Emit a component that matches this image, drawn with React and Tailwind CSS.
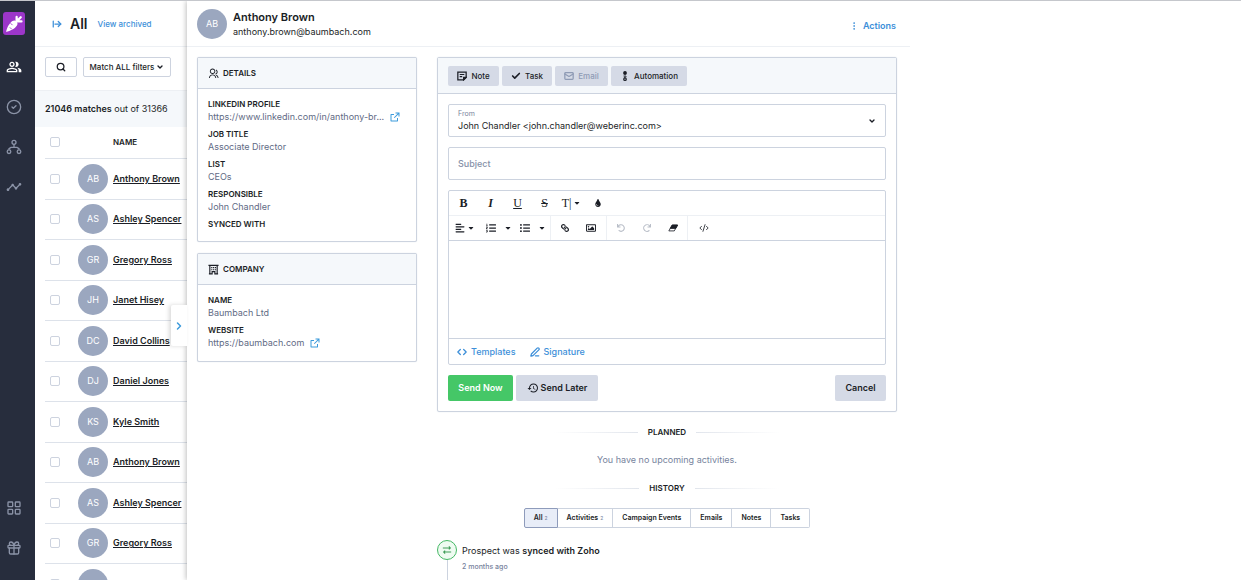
import {
  ArrowRightFromLine,
  Check,
  ChevronDown,
  ChevronRight,
  CircleCheck,
  Code,
  CodeXml,
  EllipsisVertical,
  Gift,
  LayoutGrid,
  Mail,
  PenLine,
  Search,
} from 'lucide-react'
import {
  FaAlignLeft,
  FaCaretDown,
  FaLink,
  FaListOl,
  FaListUl,
  FaRedo,
  FaRegImage,
  FaTint,
  FaUndo,
} from 'react-icons/fa'
import { MdHistory, MdOutlinePeopleAlt, MdTimeline } from 'react-icons/md'
import { RiExternalLinkLine, RiGroupLine } from 'react-icons/ri'

const prospects = [
  'Anthony Brown',
  'Ashley Spencer',
  'Gregory Ross',
  'Janet Hisey',
  'David Collins',
  'Daniel Jones',
  'Kyle Smith',
  'Anthony Brown',
  'Ashley Spencer',
  'Gregory Ross',
  'Janet Hisey',
]

const details = [
  { label: 'LINKEDIN PROFILE', value: 'https://www.linkedin.com/in/anthony-br...', link: true },
  { label: 'JOB TITLE', value: 'Associate Director' },
  { label: 'LIST', value: 'CEOs' },
  { label: 'RESPONSIBLE', value: 'John Chandler' },
  { label: 'SYNCED WITH' },
]

const company = [
  { label: 'NAME', value: 'Baumbach Ltd' },
  { label: 'WEBSITE', value: 'https://baumbach.com', link: true },
]

const historyTabs = [
  { name: 'All', count: 2 },
  { name: 'Activities', count: 2 },
  { name: 'Campaign Events' },
  { name: 'Emails' },
  { name: 'Notes' },
  { name: 'Tasks' },
]

const initials = (name) => name.split(' ').map((part) => part[0]).join('')

function CarrotLogo({ className }) {
  return (
    <svg viewBox="0 0 24 24" className={className}>
      <path
        d="M1.500 22.500C2.500 17 6 10.500 10 8c2-1.300 4.300-.8 5.500.6 1.300 1.400 1.600 3.500.4 5.400C13.500 18 7 21.500 1.500 22.500z"
        fill="currentColor"
      />
      <path d="M15.500 8.500L15.500 2.500M15.500 8.500L21 3M15.500 8.500L22 8.500" stroke="currentColor" strokeWidth="3" strokeLinecap="round" />
      <path d="M7.500 11l2.500 2.500M9 19l-2.500-2.500" stroke="#9c36c9" strokeWidth="1.2" />
    </svg>
  )
}

function NetworkIcon({ className }) {
  return (
    <svg viewBox="0 0 24 24" fill="none" stroke="currentColor" strokeWidth="2" className={className}>
      <circle cx="12" cy="5" r="3" />
      <circle cx="4.5" cy="19" r="2.7" />
      <circle cx="19.5" cy="19" r="2.7" />
      <path d="M12 8v4.5M4.5 16v-1.5l3-2h9l3 2V16" />
    </svg>
  )
}

function BuildingIcon({ className }) {
  return (
    <svg viewBox="0 0 24 24" fill="none" stroke="currentColor" strokeWidth="2.5" className={className}>
      <path d="M1 3h22M4 3v18M20 3v18M2 21.500h7v-5h6v5h7" />
      <path d="M7 8h2.500M11 8h2.500M15 8h2.500M7 12.500h2.500M11 12.500h2.500M15 12.500h2.500" />
    </svg>
  )
}

function NoteIcon({ className }) {
  return (
    <svg viewBox="0 0 24 24" fill="none" stroke="currentColor" strokeWidth="3" className={className}>
      <path d="M2 2.500h20v13l-6 6H2z" />
      <path d="M6.500 8.500h11M6.500 13.500h6" strokeWidth="2.5" />
      <path d="M16 21v-6h6z" fill="currentColor" />
    </svg>
  )
}

function AutomationIcon({ className }) {
  return (
    <svg viewBox="0 0 24 24" fill="none" stroke="currentColor" strokeWidth="3" className={className}>
      <circle cx="12" cy="4.5" r="3" fill="currentColor" />
      <circle cx="12" cy="19.5" r="3" />
      <path d="M12 7v9M8.500 12l3.500 3.500 3.500-3.500" strokeWidth="2" />
    </svg>
  )
}

function EraserIcon({ className }) {
  return (
    <svg viewBox="0 0 24 24" fill="none" stroke="currentColor" strokeWidth="2" className={className}>
      <path d="M10 5h13l-8 14H2z" />
      <path d="M10 5h13l-4.500 8h-13z" fill="currentColor" />
    </svg>
  )
}

function SyncIcon({ className }) {
  return (
    <svg viewBox="0 0 24 24" fill="none" stroke="currentColor" strokeWidth="2.5" className={className}>
      <path d="M2 7h18M16.500 3.500L20 7l-3.500 3.500" />
      <path d="M22 17H4M7.500 13.500L4 17l3.500 3.500" />
    </svg>
  )
}

function Avatar({ name }) {
  return (
    <div className="flex h-[30px] w-[30px] shrink-0 items-center justify-center rounded-full bg-[#9ba7bf] text-[9px] text-white">
      {initials(name)}
    </div>
  )
}

function Sidebar() {
  return (
    <nav className="flex w-[35px] shrink-0 flex-col items-center bg-[#272d3d] pt-[11px] pr-[7px] pb-6 text-[#8b93a7]">
      <a href="#" aria-label="Home" className="flex h-[23px] w-[22px] shrink-0 items-center justify-center rounded-[3px] bg-[#9c36c9] text-white">
        <CarrotLogo className="h-[18px] w-[18px]" />
      </a>
      <a href="#" aria-label="Prospects" className="mt-6 text-white"><MdOutlinePeopleAlt className="h-4 w-4" /></a>
      <a href="#" aria-label="Tasks" className="mt-6"><CircleCheck className="h-4 w-4" /></a>
      <a href="#" aria-label="Automations" className="mt-6"><NetworkIcon className="h-4 w-4" /></a>
      <a href="#" aria-label="Reports" className="mt-6"><MdTimeline className="h-4 w-4" /></a>
      <a href="#" aria-label="Apps" className="mt-auto"><LayoutGrid className="h-4 w-4" /></a>
      <a href="#" aria-label="Rewards" className="mt-6"><Gift className="h-4 w-4" /></a>
    </nav>
  )
}

function Checkbox({ label }) {
  return (
    <input
      type="checkbox"
      aria-label={label}
      className="block h-[10px] w-[10px] appearance-none rounded-[2px] border border-[#cdd3df] bg-white"
    />
  )
}

function ProspectList() {
  return (
    <section className="flex w-[152px] shrink-0 flex-col">
      <header className="flex h-[46px] shrink-0 items-center border-b border-[#edf0f4] pl-[17px]">
        <ArrowRightFromLine className="h-[10px] w-[10px] text-[#3d8fd9]" strokeWidth={3} />
        <h1 className="ml-2 text-[14px] font-semibold">All</h1>
        <a href="#" className="ml-[10px] text-[8px] font-medium text-[#3d8fd9]">View archived</a>
      </header>
      <div className="flex h-[44px] shrink-0 items-center gap-[6px] border-b border-[#edf0f4] pb-[3px] pl-[10px]">
        <button aria-label="Search" className="flex h-5 w-8 items-center justify-center rounded-[2px] border border-[#cdd3df]">
          <Search className="h-[10px] w-[10px]" strokeWidth={3} />
        </button>
        <button className="flex h-5 w-[88px] items-center justify-center gap-[2px] rounded-[2px] border border-[#cdd3df] text-[8px] font-medium whitespace-nowrap">
          Match ALL filters
          <ChevronDown className="h-2 w-2" strokeWidth={4} />
        </button>
      </div>
      <p className="flex h-[36px] shrink-0 items-center bg-[#f5f8fb] pl-[10px] text-[9px] whitespace-pre">
        <strong className="font-semibold">21046 matches</strong> out of 31366
      </p>
      <div className="pl-[10px]">
        <table className="w-full table-fixed border-collapse text-left">
          <thead>
            <tr className="h-[31px] border-b border-[#dde2ea]">
              <th className="w-[33px] pl-[5px]"><Checkbox label="Select all" /></th>
              <th className="w-[35px]"></th>
              <th className="text-[8px] font-semibold">NAME</th>
            </tr>
          </thead>
          <tbody>
            {prospects.map((name, i) => (
              <tr key={i} className="border-b border-[#dde2ea] odd:h-[41px] even:h-[40px]">
                <td className="pl-[5px]"><Checkbox label={`Select ${name}`} /></td>
                <td><Avatar name={name} /></td>
                <td className="text-[9px] font-semibold whitespace-nowrap">
                  <a href="#" className="underline">{name}</a>
                </td>
              </tr>
            ))}
          </tbody>
        </table>
      </div>
    </section>
  )
}

function InfoCard({ icon, title, fields }) {
  return (
    <section className="rounded-[2px] border border-[#ccd3df] bg-white shadow-[0_0_1px_#ccd3df]">
      <h3 className="flex h-[31px] items-center gap-1 border-b border-[#ccd3df] bg-[#f5f8fb] pl-[10px] text-[8px] font-semibold">
        {icon}
        {title}
      </h3>
      <dl className="flex flex-col gap-1 px-[10px] pt-[9px] pb-[11px]">
        {fields.map(({ label, value, link }) => (
          <div key={label}>
            <dt className="text-[8px] leading-[12px] font-semibold">{label}</dt>
            {value && (
              <dd className="text-[9px] leading-[14px] text-[#5f6b85]">
                {link ? (
                  <a href="#" className="flex items-center gap-[5px] whitespace-nowrap">
                    {value}
                    <RiExternalLinkLine className="h-3 w-3 shrink-0 text-[#3d9bdc]" />
                  </a>
                ) : value}
              </dd>
            )}
          </div>
        ))}
      </dl>
    </section>
  )
}

const actionButton = 'flex h-5 items-center justify-center gap-1 rounded-[2px] bg-[#d5dae6] text-[8px] font-medium'

function ToolButton({ label, children, className = 'w-[26px]' }) {
  return (
    <button type="button" aria-label={label} className={`flex h-6 items-center justify-center gap-[2px] ${className}`}>
      {children}
    </button>
  )
}

function Editor() {
  const letter = 'font-["Liberation_Serif",serif] text-[12px] leading-none'
  return (
    <div className="rounded-[2px] border border-[#ccd3df]">
      <div className="flex h-[25px] items-center border-b border-[#edf0f4] pl-[1px]">
        <ToolButton label="Bold" className="w-[27px]"><span className={`${letter} font-bold`}>B</span></ToolButton>
        <ToolButton label="Italic" className="w-[27px]"><span className={`${letter} font-bold italic`}>I</span></ToolButton>
        <ToolButton label="Underline" className="w-[27px]"><span className={`${letter} underline`}>U</span></ToolButton>
        <ToolButton label="Strikethrough" className="w-[27px]"><span className={`${letter} line-through`}>S</span></ToolButton>
        <ToolButton label="Font size" className="w-[27px]"><span className={letter}>T|</span><FaCaretDown className="h-2 w-2" /></ToolButton>
        <ToolButton label="Colour"><FaTint className="h-2 w-2" /></ToolButton>
      </div>
      <div className="flex h-[25px] items-center border-b border-[#ccd3df] pl-[3px]">
        <ToolButton label="Align"><FaAlignLeft className="h-[10px] w-[10px]" /><FaCaretDown className="h-2 w-2" /></ToolButton>
        <ToolButton label="Ordered list"><FaListOl className="h-[10px] w-[10px]" /></ToolButton>
        <FaCaretDown className="h-2 w-2" />
        <ToolButton label="Unordered list"><FaListUl className="h-[10px] w-[10px]" /></ToolButton>
        <FaCaretDown className="h-2 w-2" />
        <div className="ml-1 flex border-l border-[#edf0f4] pr-[2px] pl-[1px]">
          <ToolButton label="Link"><FaLink className="h-2 w-2 rotate-90" /></ToolButton>
          <ToolButton label="Image"><FaRegImage className="h-[10px] w-[10px]" /></ToolButton>
        </div>
        <div className="flex border-x border-[#edf0f4] px-[1px] text-[#b9bec8]">
          <ToolButton label="Undo"><FaUndo className="h-2 w-2" /></ToolButton>
          <ToolButton label="Redo"><FaRedo className="h-2 w-2" /></ToolButton>
          <ToolButton label="Clear formatting"><EraserIcon className="h-[10px] w-[10px] text-[#1b1e26]" /></ToolButton>
        </div>
        <ToolButton label="Code view" className="w-8"><CodeXml className="h-[10px] w-[10px]" strokeWidth={2} /></ToolButton>
      </div>
      <textarea aria-label="Message" className="block h-[97px] w-full resize-none outline-none" />
      <div className="flex h-[26px] items-center gap-[14px] border-t border-[#ccd3df] pl-2 text-[9px] font-medium text-[#3d8fd9]">
        <button type="button" className="flex items-center gap-1"><Code className="h-[10px] w-[10px]" strokeWidth={3} />Templates</button>
        <button type="button" className="flex items-center gap-1"><PenLine className="h-[10px] w-[10px]" strokeWidth={3} />Signature</button>
      </div>
    </div>
  )
}

function Composer() {
  return (
    <section className="rounded-[2px] border border-[#ccd3df] shadow-[0_0_1px_#ccd3df]">
      <div className="flex h-[36px] items-center gap-[3px] border-b border-[#ccd3df] bg-[#f5f8fb] pl-[10px]">
        <button className={`${actionButton} w-[51px]`}><NoteIcon className="h-[10px] w-[10px]" />Note</button>
        <button className={`${actionButton} w-[50px]`}><Check className="h-[10px] w-[10px]" strokeWidth={4} />Task</button>
        <button disabled className={`${actionButton} w-[53px] text-[#8f9bb5]`}><Mail className="h-[10px] w-[10px]" strokeWidth={3} />Email</button>
        <button className={`${actionButton} w-[76px]`}><AutomationIcon className="h-[10px] w-[10px]" />Automation</button>
      </div>
      <form className="flex flex-col gap-[10px] p-[10px]" onSubmit={(e) => e.preventDefault()}>
        <div className="flex h-[33px] items-center rounded-[2px] border border-[#ccd3df] px-[9px]">
          <div className="flex-1">
            <label htmlFor="from" className="block text-[7px] leading-[10px] text-[#77839d]">From</label>
            <select id="from" className="block h-[14px] w-full appearance-none text-[9px] leading-[14px] outline-none">
              <option>John Chandler &lt;john.chandler@weberinc.com&gt;</option>
            </select>
          </div>
          <ChevronDown className="h-2 w-2" strokeWidth={4} />
        </div>
        <input
          aria-label="Subject"
          placeholder="Subject"
          className="h-[33px] rounded-[2px] border border-[#ccd3df] px-[9px] text-[9px] font-medium outline-none placeholder:text-[#8691a8]"
        />
        <Editor />
        <div className="flex gap-[3px] text-[9px] font-semibold">
          <button className="h-[26px] w-[65px] rounded-[2px] bg-[#45c767] text-white">Send Now</button>
          <button className="flex h-[26px] w-[82px] items-center justify-center gap-[2px] rounded-[2px] bg-[#d5dae6]">
            <MdHistory className="h-3 w-3" />
            Send Later
          </button>
          <button className="ml-auto h-[26px] w-[51px] rounded-[2px] bg-[#d5dae6]">Cancel</button>
        </div>
      </form>
    </section>
  )
}

function Divider({ children }) {
  return (
    <h3 className="flex items-center justify-center gap-[10px] text-[8px] leading-[14px] font-semibold">
      <span className="h-px w-[84px] bg-linear-to-r from-transparent to-[#e1e5ec]" />
      {children}
      <span className="h-px w-[84px] bg-linear-to-l from-transparent to-[#e1e5ec]" />
    </h3>
  )
}

function Activity() {
  return (
    <section className="pt-[13px]">
      <Divider>PLANNED</Divider>
      <p className="py-[14px] text-center text-[9px] leading-[14px] text-[#77839d]">You have no upcoming activities.</p>
      <Divider>HISTORY</Divider>
      <div className="mt-[13px] flex justify-center">
        {historyTabs.map(({ name, count }, i) => (
          <button
            key={name}
            className={
              i === 0
                ? 'h-5 rounded-l-[2px] border border-[#8e9bbb] bg-[#e8edf8] px-[9px] text-[7px] font-semibold'
                : 'h-5 border border-l-0 border-[#ccd3df] px-[9px] text-[7px] font-semibold last:rounded-r-[2px]'
            }
          >
            {name}
            {count && <span className="ml-[2px] text-[5px] font-normal text-[#77839d]">{count}</span>}
          </button>
        ))}
      </div>
      <div className="mt-3 flex gap-[5px]">
        <div className="flex flex-col items-center">
          <span className="flex h-5 w-5 items-center justify-center rounded-full border border-[#45b865] bg-[#eefbf1] text-[#3f9d58]">
            <SyncIcon className="h-[10px] w-[10px]" />
          </span>
          <span className="h-10 w-px bg-[#ccd3df]" />
        </div>
        <div className="pt-1">
          <p className="text-[9px] leading-[14px]">Prospect was <strong className="font-semibold">synced with Zoho</strong></p>
          <time className="block pt-[3px] text-[7px] leading-[12px] font-medium text-[#77839d]">2 months ago</time>
        </div>
      </div>
    </section>
  )
}

export default function App() {
  return (
    <div className="flex h-screen overflow-hidden border-t border-[#c5c7cc] bg-white font-[Inter,sans-serif] text-[#1b1e26]">
      <Sidebar />
      <ProspectList />
      <main className="relative min-w-0 flex-1 bg-white shadow-[-1px_0_5px_rgba(0,0,0,0.25)]">
        <button
          aria-label="Collapse panel"
          className="absolute top-[304px] -left-4 flex h-[41px] w-4 items-center justify-center rounded-l-[2px] bg-white text-[#3d9bdc] shadow-[-2px_0_4px_rgba(0,0,0,0.15)]"
        >
          <ChevronRight className="h-3 w-3" strokeWidth={3} />
        </button>
        <div className="max-w-[723px]">
          <header className="flex h-[46px] items-center gap-[6px] border-b border-[#edf0f4] pr-[14px] pl-[10px]">
            <Avatar name="Anthony Brown" />
            <div>
              <h2 className="text-[11px] leading-[15px] font-semibold">Anthony Brown</h2>
              <p className="text-[9px] leading-[13px]">anthony.brown@baumbach.com</p>
            </div>
            <button className="ml-auto flex items-center gap-1 pt-1 text-[9px] font-semibold text-[#3d8fd9]">
              <EllipsisVertical className="h-[10px] w-[10px]" />
              Actions
            </button>
          </header>
          <div className="flex items-start gap-5 py-[10px] pr-[13px] pl-[10px]">
            <div className="flex w-[220px] shrink-0 flex-col gap-[11px]">
              <InfoCard icon={<RiGroupLine className="h-[11px] w-[11px]" />} title="DETAILS" fields={details} />
              <InfoCard icon={<BuildingIcon className="h-[11px] w-[11px]" />} title="COMPANY" fields={company} />
            </div>
            <div className="min-w-0 flex-1">
              <Composer />
              <Activity />
            </div>
          </div>
        </div>
      </main>
    </div>
  )
}
